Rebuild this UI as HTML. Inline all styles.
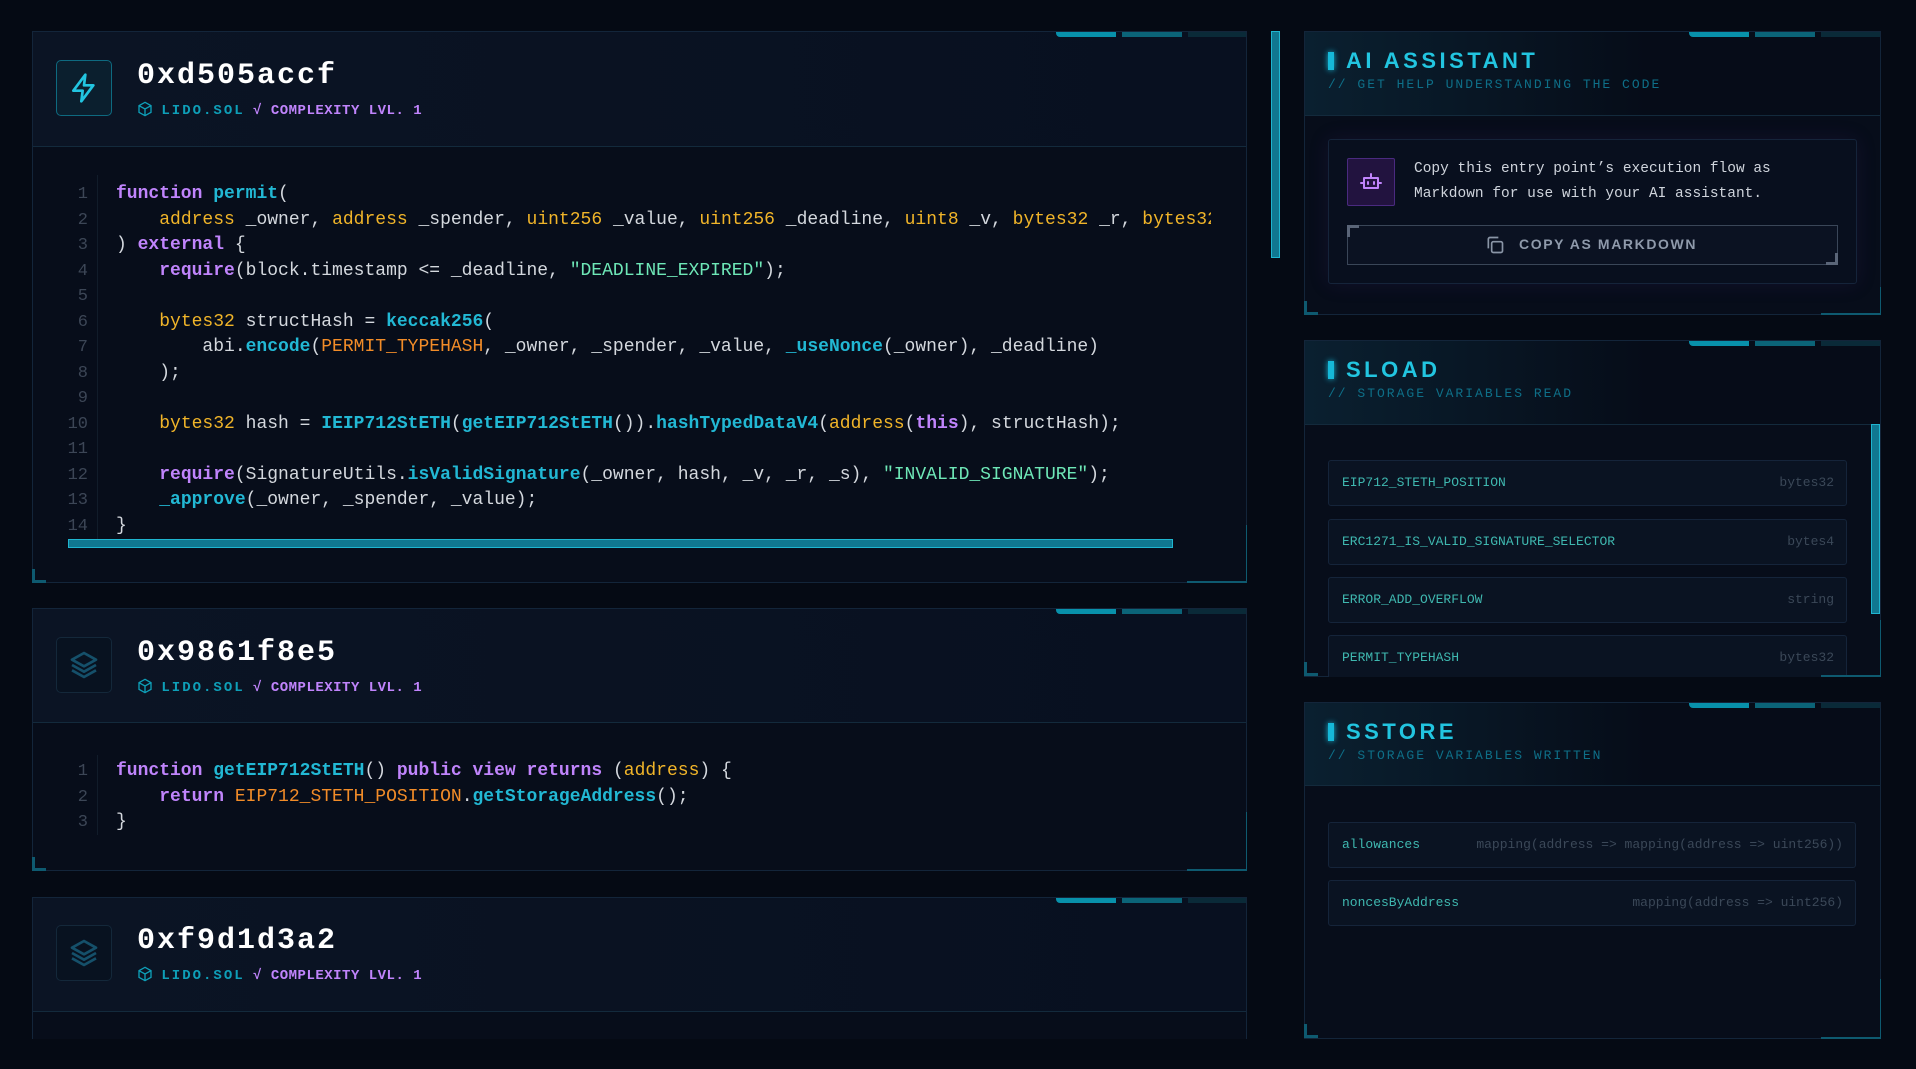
<!DOCTYPE html>
<html><head><meta charset="utf-8"><style>
*{margin:0;padding:0;box-sizing:border-box}
body{width:1916px;height:1069px;background:#050a14;overflow:hidden;position:relative;font-family:"Liberation Mono",monospace}
.abs{position:absolute}
.card{position:absolute;background:#070d1a;border:1px solid #13253a;overflow:hidden}
.hdr{position:absolute;left:0;right:0;top:0;background:linear-gradient(90deg,#0b1424,#081020);border-bottom:1px solid #132a3c}
.tabs{position:absolute;top:-1px;height:6px}
.tabs i{position:absolute;top:0;height:6px;width:60px}
.title{position:absolute;font-family:"Liberation Mono",monospace;font-weight:bold;font-size:30px;color:#fff;letter-spacing:2px;line-height:30px}
.meta{position:absolute;font-weight:bold;font-size:14px;line-height:16px;white-space:nowrap}
.meta .l{color:#0e9fb8;letter-spacing:2px}
.meta .c{color:#c084fc;letter-spacing:.5px}
.ibox{position:absolute;width:56px;height:56px;border-radius:5px}
.code{position:absolute;font-size:18px;line-height:25.5px;white-space:pre;color:#d4d8de;overflow:hidden}
.ln{position:absolute;font-size:17px;line-height:25.5px;color:#3c4656;text-align:right;width:30px;white-space:pre}
.k{color:#c084fc;font-weight:bold}.f{color:#22b8d4;font-weight:bold}.t{color:#f0b429}.s{color:#6ee7b7}.o{color:#f28c28}
.gut{position:absolute;width:1px;background:#111c2a}
.bl{position:absolute;width:14px;height:14px;border-left:3px solid #0e5a70;border-bottom:3px solid #0e5a70}
.br{position:absolute;border-right:1px solid #0e5a70;border-bottom:2px solid #0e5a70}
.ptitle{position:absolute;font-family:"Liberation Sans",sans-serif;font-weight:bold;font-size:22px;color:#22c5e0;letter-spacing:3.5px;line-height:24px}
.pbar{position:absolute;width:6px;height:18px;background:#16b8d8;box-shadow:0 0 6px #16b8d8}
.psub{position:absolute;font-size:13px;color:#0e6f88;letter-spacing:2px;line-height:14px}
.row{position:absolute;background:#0a1322;border:1px solid #15243a;border-radius:3px;font-size:13px;line-height:44px;color:#3fb8b0}
.row span{position:absolute;right:12px;color:#3b4858}
</style></head><body>

<!-- CARD 1 -->
<div class="card" style="left:32px;top:31px;width:1215px;height:552px">
 <div class="hdr" style="height:115px"></div>
 <div class="tabs" style="left:1023px"><i style="left:0;background:#0891ab;border-radius:0 0 0 4px"></i><i style="left:66px;background:#0b6478"></i><i style="left:132px;background:#0a2a38"></i></div>
</div>
<div class="ibox" style="left:56px;top:60px;border:1px solid #0e6a80;background:#0b1f2e"></div>
<svg class="abs" style="left:68px;top:72px" width="32" height="32" viewBox="0 0 24 24" fill="none" stroke="#22c5e0" stroke-width="2" stroke-linejoin="round"><path d="M13 2 4 14h7l-1 8 9-12h-7z"/></svg>
<div class="title" style="left:137px;top:61px">0xd505accf</div>
<div class="meta" style="left:137px;top:101px"><svg width="16" height="16" viewBox="0 0 24 24" fill="none" stroke="#0e9fb8" stroke-width="2" style="vertical-align:-3px"><path d="M12 2 21 7v10l-9 5-9-5V7z M3 7l9 5 9-5 M12 12v10"/></svg> <span class="l">LIDO.SOL</span> <span class="c">√ COMPLEXITY LVL. 1</span></div>
<div class="gut" style="left:97px;top:175px;height:365px"></div>
<div class="ln" style="left:58px;top:182px">1
2
3
4
5
6
7
8
9
10
11
12
13
14</div>
<div class="code" style="left:116px;top:182px;width:1095px;height:358px"><span class="k">function</span> <span class="f">permit</span>(
    <span class="t">address</span> _owner, <span class="t">address</span> _spender, <span class="t">uint256</span> _value, <span class="t">uint256</span> _deadline, <span class="t">uint8</span> _v, <span class="t">bytes32</span> _r, <span class="t">bytes32</span> _s
) <span class="k">external</span> {
    <span class="k">require</span>(block.timestamp &lt;= _deadline, <span class="s">"DEADLINE_EXPIRED"</span>);

    <span class="t">bytes32</span> structHash = <span class="f">keccak256</span>(
        abi.<span class="f">encode</span>(<span class="o">PERMIT_TYPEHASH</span>, _owner, _spender, _value, <span class="f">_useNonce</span>(_owner), _deadline)
    );

    <span class="t">bytes32</span> hash = <span class="f">IEIP712StETH</span>(<span class="f">getEIP712StETH</span>()).<span class="f">hashTypedDataV4</span>(<span class="t">address</span>(<span class="k">this</span>), structHash);

    <span class="k">require</span>(SignatureUtils.<span class="f">isValidSignature</span>(_owner, hash, _v, _r, _s), <span class="s">"INVALID_SIGNATURE"</span>);
    <span class="f">_approve</span>(_owner, _spender, _value);
}</div>
<div class="abs" style="left:68px;top:539px;width:1105px;height:9px;background:#107790;border:1px solid #1fb5d0"></div>
<div class="bl" style="left:32px;top:569px"></div>
<div class="br" style="left:1187px;top:525px;width:60px;height:58px"></div>

<!-- CARD 2 -->
<div class="card" style="left:32px;top:608px;width:1215px;height:263px">
 <div class="hdr" style="height:114px"></div>
 <div class="tabs" style="left:1023px"><i style="left:0;background:#0891ab;border-radius:0 0 0 4px"></i><i style="left:66px;background:#0b6478"></i><i style="left:132px;background:#0a2a38"></i></div>
</div>
<div class="ibox" style="left:56px;top:637px;border:1px solid #14283a;background:#081220"></div>
<svg class="abs" style="left:68px;top:649px" width="32" height="32" viewBox="0 0 24 24" fill="none" stroke="#15506a" stroke-width="2" stroke-linejoin="round"><path d="M12 3 3 8l9 5 9-5z M3 12l9 5 9-5 M3 16l9 5 9-5"/></svg>
<div class="title" style="left:137px;top:638px">0x9861f8e5</div>
<div class="meta" style="left:137px;top:678px"><svg width="16" height="16" viewBox="0 0 24 24" fill="none" stroke="#0e9fb8" stroke-width="2" style="vertical-align:-3px"><path d="M12 2 21 7v10l-9 5-9-5V7z M3 7l9 5 9-5 M12 12v10"/></svg> <span class="l">LIDO.SOL</span> <span class="c">√ COMPLEXITY LVL. 1</span></div>
<div class="gut" style="left:97px;top:755px;height:80px"></div>
<div class="ln" style="left:58px;top:759px">1
2
3</div>
<div class="code" style="left:116px;top:759px;width:1095px;height:80px"><span class="k">function</span> <span class="f">getEIP712StETH</span>() <span class="k">public</span> <span class="k">view</span> <span class="k">returns</span> (<span class="t">address</span>) {
    <span class="k">return</span> <span class="o">EIP712_STETH_POSITION</span>.<span class="f">getStorageAddress</span>();
}</div>
<div class="bl" style="left:32px;top:857px"></div>
<div class="br" style="left:1187px;top:812px;width:60px;height:59px"></div>

<!-- CARD 3 -->
<div class="card" style="left:32px;top:897px;width:1215px;height:160px">
 <div class="hdr" style="height:114px"></div>
 <div class="tabs" style="left:1023px"><i style="left:0;background:#0891ab;border-radius:0 0 0 4px"></i><i style="left:66px;background:#0b6478"></i><i style="left:132px;background:#0a2a38"></i></div>
</div>
<div class="ibox" style="left:56px;top:925px;border:1px solid #14283a;background:#081220"></div>
<svg class="abs" style="left:68px;top:937px" width="32" height="32" viewBox="0 0 24 24" fill="none" stroke="#15506a" stroke-width="2" stroke-linejoin="round"><path d="M12 3 3 8l9 5 9-5z M3 12l9 5 9-5 M3 16l9 5 9-5"/></svg>
<div class="title" style="left:137px;top:926px">0xf9d1d3a2</div>
<div class="meta" style="left:137px;top:966px"><svg width="16" height="16" viewBox="0 0 24 24" fill="none" stroke="#0e9fb8" stroke-width="2" style="vertical-align:-3px"><path d="M12 2 21 7v10l-9 5-9-5V7z M3 7l9 5 9-5 M12 12v10"/></svg> <span class="l">LIDO.SOL</span> <span class="c">√ COMPLEXITY LVL. 1</span></div>
<div class="abs" style="left:0;top:1039px;width:1290px;height:30px;background:#050a14"></div>

<!-- vertical scrollbar -->
<div class="abs" style="left:1271px;top:31px;width:9px;height:227px;background:#107790;border:1px solid #1fb5d0"></div>

<!-- AI ASSISTANT -->
<div class="card" style="left:1304px;top:31px;width:577px;height:284px">
 <div class="hdr" style="height:84px;background:linear-gradient(90deg,#0a2030,#060c18 60%)"></div>
 <div class="tabs" style="left:384px"><i style="left:0;background:#0891ab;border-radius:0 0 0 4px"></i><i style="left:66px;background:#0b6478"></i><i style="left:132px;background:#0a2a38"></i></div>
</div>
<div class="pbar" style="left:1328px;top:52px"></div>
<div class="ptitle" style="left:1346px;top:49px">AI ASSISTANT</div>
<div class="psub" style="left:1328px;top:78px">// GET HELP UNDERSTANDING THE CODE</div>
<div class="abs" style="left:1328px;top:139px;width:529px;height:145px;border:1px solid #15243a;border-radius:3px;background:#080f1e;box-shadow:0 0 20px rgba(90,40,140,.15)"></div>
<div class="abs" style="left:1347px;top:158px;width:48px;height:48px;background:#22133f;border:1px solid #4a2a80;border-radius:2px"></div>
<svg class="abs" style="left:1359px;top:170px" width="24" height="24" viewBox="0 0 24 24" fill="none" stroke="#c084fc" stroke-width="2" stroke-linecap="round" stroke-linejoin="round"><path d="M12 8V4 M12 4h0 M5 8h14v10H5z M2 13h2 M20 13h2 M9 12v2 M15 12v2"/></svg>
<div class="abs" style="left:1414px;top:157px;font-size:14.5px;line-height:25px;color:#cfd4dc;white-space:pre">Copy this entry point’s execution flow as
Markdown for use with your AI assistant.</div>
<div class="abs" style="left:1347px;top:225px;width:491px;height:40px;border:1px solid #3a4658;background:#0b1222"></div>
<div class="abs" style="left:1347px;top:225px;width:12px;height:12px;border-left:3px solid #5a6578;border-top:3px solid #5a6578"></div>
<div class="abs" style="left:1826px;top:253px;width:12px;height:12px;border-right:3px solid #5a6578;border-bottom:3px solid #5a6578"></div>
<svg class="abs" style="left:1485px;top:235px" width="20" height="20" viewBox="0 0 24 24" fill="none" stroke="#8a95a6" stroke-width="2"><rect x="8" y="8" width="13" height="13" rx="2"/><path d="M4 16V5a2 2 0 0 1 2-2h10"/></svg>
<div class="abs" style="left:1519px;top:236px;font-family:'Liberation Sans',sans-serif;font-weight:bold;font-size:14px;letter-spacing:1.6px;color:#8f9aab">COPY AS MARKDOWN</div>
<div class="bl" style="left:1304px;top:301px"></div>
<div class="br" style="left:1821px;top:287px;width:60px;height:28px"></div>

<!-- SLOAD -->
<div class="card" style="left:1304px;top:340px;width:577px;height:337px">
 <div class="hdr" style="height:84px;background:linear-gradient(90deg,#0a2030,#060c18 60%)"></div>
 <div class="tabs" style="left:384px"><i style="left:0;background:#0891ab;border-radius:0 0 0 4px"></i><i style="left:66px;background:#0b6478"></i><i style="left:132px;background:#0a2a38"></i></div>
</div>
<div class="pbar" style="left:1328px;top:361px"></div>
<div class="ptitle" style="left:1346px;top:358px">SLOAD</div>
<div class="psub" style="left:1328px;top:387px">// STORAGE VARIABLES READ</div>
<div class="row" style="left:1328px;top:460px;width:519px;height:46px;padding-left:13px">EIP712_STETH_POSITION<span>bytes32</span></div>
<div class="row" style="left:1328px;top:519px;width:519px;height:46px;padding-left:13px">ERC1271_IS_VALID_SIGNATURE_SELECTOR<span>bytes4</span></div>
<div class="row" style="left:1328px;top:577px;width:519px;height:46px;padding-left:13px">ERROR_ADD_OVERFLOW<span>string</span></div>
<div class="row" style="left:1328px;top:635px;width:519px;height:46px;padding-left:13px">PERMIT_TYPEHASH<span>bytes32</span></div>
<div class="abs" style="left:1300px;top:677px;width:600px;height:25px;background:#050a14"></div>
<div class="abs" style="left:1871px;top:424px;width:9px;height:190px;background:#107790;border:1px solid #1fb5d0"></div>
<div class="bl" style="left:1304px;top:662px"></div>
<div class="br" style="left:1821px;top:620px;width:60px;height:57px"></div>

<!-- SSTORE -->
<div class="card" style="left:1304px;top:702px;width:577px;height:337px">
 <div class="hdr" style="height:83px;background:linear-gradient(90deg,#0a2030,#060c18 60%)"></div>
 <div class="tabs" style="left:384px"><i style="left:0;background:#0891ab;border-radius:0 0 0 4px"></i><i style="left:66px;background:#0b6478"></i><i style="left:132px;background:#0a2a38"></i></div>
</div>
<div class="pbar" style="left:1328px;top:723px"></div>
<div class="ptitle" style="left:1346px;top:720px">SSTORE</div>
<div class="psub" style="left:1328px;top:749px">// STORAGE VARIABLES WRITTEN</div>
<div class="row" style="left:1328px;top:822px;width:528px;height:46px;padding-left:13px">allowances<span>mapping(address =&gt; mapping(address =&gt; uint256))</span></div>
<div class="row" style="left:1328px;top:880px;width:528px;height:46px;padding-left:13px">noncesByAddress<span>mapping(address =&gt; uint256)</span></div>
<div class="bl" style="left:1304px;top:1024px"></div>
<div class="br" style="left:1821px;top:979px;width:60px;height:60px"></div>
</body></html>
